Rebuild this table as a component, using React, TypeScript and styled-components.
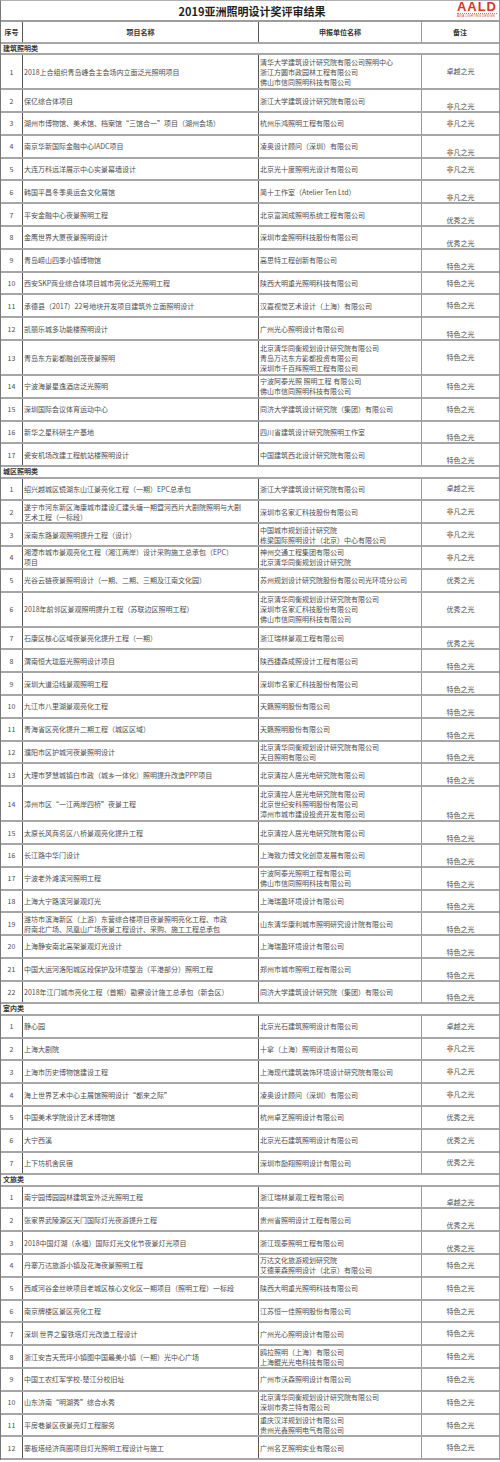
import React from "react";
import styled, { createGlobalStyle } from "styled-components";

const GlobalStyle = createGlobalStyle`
  html, body {
    margin: 0;
    padding: 0;
    background: #fff;
  }
  body {
    font-family: "Noto Sans CJK SC", "Liberation Sans", sans-serif;
  }
`;

const COLS = "22px 236px 163px 1fr";

const Sheet = styled.div`
  width: 500px;
  box-sizing: border-box;
  border-left: 1px solid #777;
  border-right: 1px solid #999;
  border-top: 1px solid #b0b0b0;
  color: #4d4d4d;
  font-size: 7px;
  line-height: 10px;
`;

const TitleBar = styled.div`
  height: 21px;
  box-sizing: border-box;
  border-bottom: 2px solid #9c9c9c;
  display: grid;
  grid-template-columns: 1fr auto 1fr;
  align-items: center;
`;

const Title = styled.div`
  grid-column: 2;
  font-size: 11px;
  line-height: 14px;
  font-weight: 700;
  color: #1f1f1f;
  padding-left: 4px;
`;

const Logo = styled.div`
  grid-column: 3;
  justify-self: end;
  align-self: start;
  margin-right: 2px;
  display: flex;
  flex-direction: column;
  align-items: stretch;
  color: #d8342c;
`;

const LogoMark = styled.span`
  font-family: "Liberation Sans", sans-serif;
  font-weight: 700;
  font-size: 13px;
  line-height: 12px;
  letter-spacing: 1px;
`;

const LogoSub = styled.span`
  font-family: "Liberation Sans", sans-serif;
  font-size: 3px;
  line-height: 4px;
  letter-spacing: 0.2px;
  white-space: nowrap;
  border-top: 1px dotted #e06a63;
`;

const Row = styled.div<{ $h: number }>`
  display: grid;
  grid-template-columns: ${COLS};
  height: ${(p) => p.$h}px;
  box-sizing: border-box;
  border-bottom: 2px solid #a6a6a6;
`;

const Cell = styled.div<{ $edge?: string }>`
  border-right: 1px solid ${(p) => p.$edge ?? "#555"};
  display: flex;
  flex-direction: column;
  justify-content: center;
  padding-left: 1px;
  white-space: nowrap;
  overflow: hidden;
`;

const NumCell = styled(Cell)`
  align-items: center;
  padding-left: 0;
`;

const HeadCell = styled(Cell)`
  align-items: center;
  padding-left: 0;
  font-weight: 700;
  color: #333;
`;

const NoteCell = styled.div<{ $low?: boolean }>`
  display: flex;
  justify-content: center;
  align-items: ${(p) => (p.$low ? "flex-end" : "center")};
  padding-bottom: ${(p) => (p.$low ? "0" : "1px")};
  white-space: nowrap;
`;

const SectionRow = styled.div`
  height: 11.3px;
  box-sizing: border-box;
  border-bottom: 2px solid #a6a6a6;
  padding-left: 2px;
  font-weight: 700;
  color: #333;
  line-height: 9px;
`;

type Entry = [string, string, string, boolean?];

const NOTE: Record<string, string> = {
  Z: "卓越之光",
  F: "非凡之光",
  Y: "优秀之光",
  T: "特色之光",
};

const sections: { title: string; rows: Entry[] }[] = [
  {
    title: "建筑照明类",
    rows: [
      ["2018上合组织青岛峰会主会场内立面泛光照明项目", "清华大学建筑设计研究院有限公司照明中心|浙江方圆市政园林工程有限公司|佛山市信同照明科技有限公司", "Z"],
      ["保亿综合体项目", "浙江大学建筑设计研究院有限公司", "F", true],
      ["湖州市博物馆、美术馆、档案馆“三馆合一”项目（湖州会场）", "杭州乐鸿照明工程有限公司", "F"],
      ["南京华新国际金融中心IADC项目", "凌奥设计顾问（深圳）有限公司", "F", true],
      ["大连万科远洋展示中心实景幕墙设计", "北京光十度照明光设计有限公司", "F"],
      ["韩国平昌冬季奥运会文化展馆", "简十工作室（Atelier Ten Ltd）", "F", true],
      ["平安金融中心夜景照明工程", "北京富润成照明系统工程有限公司", "Y", true],
      ["金鹰世界大厦夜景照明设计", "深圳市金照明科技股份有限公司", "Y", true],
      ["青岛崂山四季小镇博物馆", "高思特工程创新有限公司", "T", true],
      ["西安SKP商业综合体项目城市亮化泛光照明工程", "陕西大明重光照明科技有限公司", "T"],
      ["承德县（2017）22号地块开发项目建筑外立面照明设计", "汉嘉视觉艺术设计（上海）有限公司", "T"],
      ["凯丽乐城多功能楼照明设计", "广州光心照明设计有限公司", "T", true],
      ["青岛东方影都融创茂夜景照明", "北京清华同衡规划设计研究院有限公司|青岛万达东方影都投资有限公司|深圳市千百辉照明工程有限公司", "T"],
      ["宁波海景星逸酒店泛光照明", "宁波阿泰光照 照明工程 有限公司|佛山市信同照明科技有限公司", "T"],
      ["深圳国际会议体育运动中心", "同济大学建筑设计研究院（集团）有限公司", "T"],
      ["新华之星科研生产基地", "四川省建筑设计研究院照明工作室", "T", true],
      ["瓷安机场改建工程航站楼照明设计", "中国建筑西北设计研究院有限公司", "T", true],
    ],
  },
  {
    title: "城区照明类",
    rows: [
      ["绍兴越城区镜湖东山江景亮化工程（一期）EPC总承包", "浙江大学建筑设计研究院有限公司", "Z"],
      ["遂宁市河东新区海康城市建设汇建头塘一期暨河西片大剧院照明与大剧|艺术工程（一标段）", "深圳市名家汇科技股份有限公司", "F"],
      ["深南东路景观照明提升工程（设计）", "中国城市规划设计研究院|栋梁国际照明设计（北京）中心有限公司", "F"],
      ["湘潭市城市景观亮化工程（湘江两岸）设计采购施工总承包（EPC）|项目", "神州交通工程集团有限公司|北京清华同衡规划设计研究院", "F"],
      ["光谷云链夜景照明设计（一期、二期、三期及江南文化园）", "苏州规划设计研究院股份有限公司光环境分公司", "Y"],
      ["2018年前邻区景观照明提升工程（苏联边区照明工程）", "北京清华同衡规划设计研究院有限公司|深圳市名家汇科技股份有限公司|佛山市信同照明科技有限公司", "Y"],
      ["石康区核心区域夜景亮化提升工程（一期）", "浙江瑞林景观工程有限公司", "Y", true],
      ["渭南恒大珑庭光照明设计项目", "陕西捷森成照设计工程有限公司", "T", true],
      ["深圳大道沿线景观照明工程", "深圳市名家汇科技股份有限公司", "T", true],
      ["九江市八里湖景观亮化工程", "天籁照明股份有限公司", "T", true],
      ["青海省区亮化提升二期工程（城区区域）", "天籁照明股份有限公司", "T", true],
      ["濮阳市区护城河夜景照明设计", "北京清华同衡规划设计研究院有限公司|天目照明有限公司", "T", true],
      ["大理市梦慧城镇白市政（城乡一体化）照明提升改造PPP项目", "北京清控人居光电研究院有限公司", "T", true],
      ["漳州市区“一江两岸四桥”夜景工程", "北京清控人居光电研究院有限公司|北京世纪安科照明股份有限公司|漳州市城市建设投资开发有限公司", "T", true],
      ["太原长风商务区八桥景观亮化提升工程", "北京清控人居光电研究院有限公司", "T", true],
      ["长江路中华门设计", "上海致力博文化创意发展有限公司", "T", true],
      ["宁波老外滩滨河照明工程", "宁波阿泰光照明工程有限公司|佛山市信同照明科技有限公司", "T", true],
      ["上海大宁路滨河景观灯光", "上海瑞盈环境设计有限公司", "T", true],
      ["潍坊市滨海新区（上游）东营综合楼项目夜景照明亮化工程、市政|府南北广场、凤凰山广场夜景工程设计、采购、施工工程总承包", "山东清华康利城市照明研究设计院有限公司", "T", true],
      ["上海静安南北高架景观灯光设计", "上海瑞盈环境设计有限公司", "T", true],
      ["中国大运河洛阳城区段保护及环境整治（平港部分）照明工程", "郑州市城市照明工程有限公司", "T", true],
      ["2018年江门城市亮化工程（首期）勘察设计施工总承包（新会区）", "同济大学建筑设计研究院（集团）有限公司", "T", true],
    ],
  },
  {
    title: "室内类",
    rows: [
      ["静心园", "北京光石建筑照明设计有限公司", "Z"],
      ["上海大剧院", "十拿（上海）照明设计有限公司", "F"],
      ["上海市历史博物馆建设工程", "上海现代建筑装饰环境设计研究院有限公司", "F"],
      ["海上世界艺术中心主展馆照明设计“都来之际”", "凌奥设计顾问（深圳）有限公司", "F"],
      ["中国美术学院设计艺术博物馆", "杭州卓艺照明设计有限公司", "Y"],
      ["大宁西溪", "北京光石建筑照明设计有限公司", "Y"],
      ["上下坊机舍民宿", "深圳市励翔照明设计有限公司", "Y"],
    ],
  },
  {
    title: "文旅类",
    rows: [
      ["南宁园博园园林建筑室外泛光照明工程", "浙江瑞林景观工程有限公司", "Z", true],
      ["张家界武陵源区天门国际灯光夜游提升工程", "贵州省照明设计工程有限公司", "Y", true],
      ["2018中国灯湖（永福）国际灯光文化节夜景灯光项目", "浙江现泰照明工程有限公司", "Y", true],
      ["丹寨万达旅游小镇及花海夜景照明工程", "万达文化旅游规划研究院|艾德莱森照明设计（北京）有限公司", "T"],
      ["西咸河谷金丝峡项目老城区核心文化区一期项目（照明工程）一标段", "陕西大明重光照明科技有限公司", "T"],
      ["南京牌楼区景区亮化工程", "江苏恒一佳照明股份有限公司", "T"],
      ["深圳 世界之窗铁塔灯光改造工程设计", "广州光心照明设计有限公司", "T"],
      ["浙江安吉天荒坪小镇图中国最美小镇（一期）光中心广场", "鸥拉照明（上海）有限公司|上海鲲光光电科技有限公司", "T"],
      ["中国工农红军学校-楚江分校旧址", "广州市沃森照明设计有限公司", "T"],
      ["山东济南“明湖秀”综合水秀", "北京清华同衡规划设计研究院有限公司|深圳市秀兰特有限公司", "T"],
      ["平房巷景区夜景亮灯工程服务", "重庆汉洋规划设计有限公司|贵州光鑫照明电气有限公司", "T"],
      ["寨板塔经济商圈项目灯光照明工程设计与施工", "广州名艺照明实业有限公司", "T"],
    ],
  },
];

const Lines = ({ text }: { text: string }) => (
  <>
    {text.split("|").map((line, i) => (
      <span key={i}>{line}</span>
    ))}
  </>
);

const ResultRow = ({ no, entry }: { no: number; entry: Entry }) => {
  const [name, org, note, low] = entry;
  const lines = Math.max(name.split("|").length, org.split("|").length);
  return (
    <Row $h={lines > 2 ? 35 : 22.8}>
      <NumCell>{no}</NumCell>
      <Cell>
        <Lines text={name} />
      </Cell>
      <Cell $edge="#9a9a9a">
        <Lines text={org} />
      </Cell>
      <NoteCell $low={low}>{NOTE[note]}</NoteCell>
    </Row>
  );
};

export default function App() {
  return (
    <>
      <GlobalStyle />
      <Sheet>
        <TitleBar>
          <Title>2019亚洲照明设计奖评审结果</Title>
          <Logo>
            <LogoMark>AALD</LogoMark>
            <LogoSub>ASIA LIGHTING DESIGN</LogoSub>
          </Logo>
        </TitleBar>
        <Row $h={22}>
          <HeadCell>序号</HeadCell>
          <HeadCell>项目名称</HeadCell>
          <HeadCell $edge="#9a9a9a">申报单位名称</HeadCell>
          <HeadCell $edge="transparent">备注</HeadCell>
        </Row>
        {sections.map((s) => (
          <React.Fragment key={s.title}>
            <SectionRow>{s.title}</SectionRow>
            {s.rows.map((r, i) => (
              <ResultRow key={i} no={i + 1} entry={r} />
            ))}
          </React.Fragment>
        ))}
      </Sheet>
    </>
  );
}
